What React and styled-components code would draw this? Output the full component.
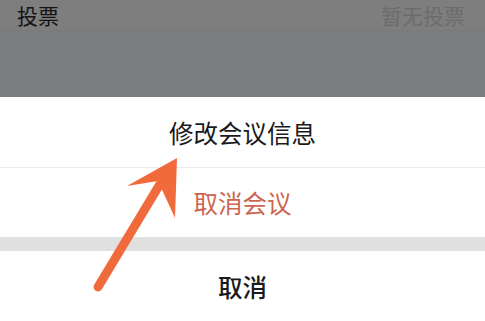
import React from 'react';
import styled, { createGlobalStyle } from 'styled-components';

const GlobalStyle = createGlobalStyle`
  html, body {
    margin: 0;
    padding: 0;
    background: #ffffff;
  }
  body {
    font-family: "Noto Sans CJK SC", "Noto Sans", sans-serif;
  }
`;

const Screen = styled.div`
  position: relative;
  width: 485px;
  height: 321px;
  overflow: hidden;
  background: #ffffff;
`;

const Backdrop = styled.div`
  height: 97px;
  background: #7b7c7d;
`;

const ListRow = styled.div`
  display: flex;
  justify-content: space-between;
  align-items: flex-start;
  height: 31px;
  box-sizing: border-box;
  padding: 0 20px 0 17px;
  background: #7e7e7e;
  border-bottom: 1px solid #7a7a7a;
`;

const RowLabel = styled.span`
  font-size: 21px;
  line-height: 31px;
  color: ${(p) => (p.muted ? '#6c6c6c' : '#141414')};
`;

const Sheet = styled.div`
  display: flex;
  flex-direction: column;
  background: #ffffff;
`;

const Action = styled.div`
  display: flex;
  align-items: center;
  justify-content: center;
  height: ${(p) => p.h || 70}px;
  font-size: 24.5px;
  font-weight: ${(p) => (p.bold ? 500 : 400)};
  color: ${(p) => (p.danger ? '#cb6650' : '#1a1a1a')};
  border-bottom: ${(p) => (p.divider ? '1px solid #ebebeb' : 'none')};
`;

const Gap = styled.div`
  height: 14px;
  background: #e0e0e0;
`;

const Arrow = styled.svg`
  position: absolute;
  left: 0;
  top: 0;
  pointer-events: none;
`;

export default function App() {
  return (
    <>
      <GlobalStyle />
      <Screen>
        <Backdrop>
          <ListRow>
            <RowLabel>投票</RowLabel>
            <RowLabel muted>暂无投票</RowLabel>
          </ListRow>
        </Backdrop>
        <Sheet>
          <Action divider>修改会议信息</Action>
          <Action danger h={69}>取消会议</Action>
          <Gap />
          <Action bold>取消</Action>
        </Sheet>
        <Arrow width="485" height="321" viewBox="0 0 485 321">
          <line x1="98" y1="287" x2="160" y2="184" stroke="#f16a3b" strokeWidth="9" strokeLinecap="round" />
          <polygon points="177,158 127,186 158,181 175,218" fill="#f16a3b" />
        </Arrow>
      </Screen>
    </>
  );
}
